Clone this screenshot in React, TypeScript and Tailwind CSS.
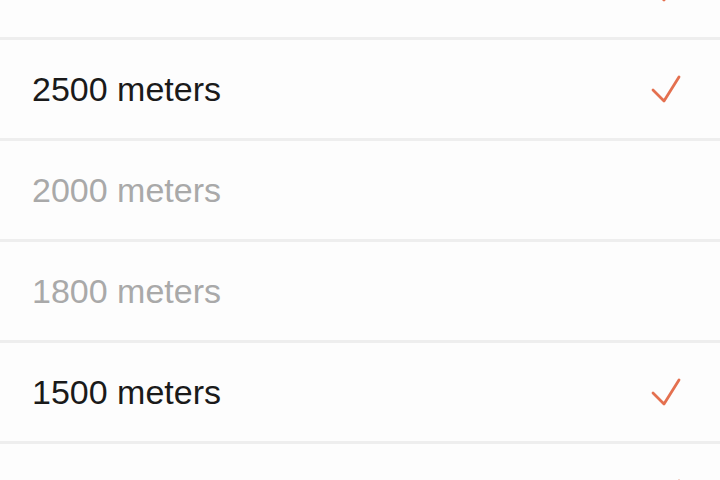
const options = [
  { label: '3000 meters', checked: true },
  { label: '2500 meters', checked: true },
  { label: '2000 meters', checked: false },
  { label: '1800 meters', checked: false },
  { label: '1500 meters', checked: true },
  { label: '1000 meters', checked: true },
];

function Check() {
  return (
    <svg width="36" height="32" viewBox="0 0 36 32" fill="none">
      <path
        d="M5 17 L16 28 L31 4"
        stroke="#e4704f"
        strokeWidth={2.8}
        strokeLinecap="round"
        strokeLinejoin="round"
      />
    </svg>
  );
}

export default function App() {
  return (
    <div className="w-[720px] h-[480px] overflow-hidden bg-[#fdfdfd] font-['Liberation_Sans',Arial,sans-serif]">
      <ul className="-mt-[61px]">
        {options.map((o) => (
          <li
            key={o.label}
            className="flex h-[101px] items-center justify-between border-b-[3px] border-[#eeeeee] pl-8 pr-9"
          >
            <span
              className={
                o.checked
                  ? 'text-[34px] text-[#1a1a1a]'
                  : 'text-[34px] text-[#a9a9a9]'
              }
            >
              {o.label}
            </span>
            {o.checked && <Check />}
          </li>
        ))}
      </ul>
    </div>
  );
}
